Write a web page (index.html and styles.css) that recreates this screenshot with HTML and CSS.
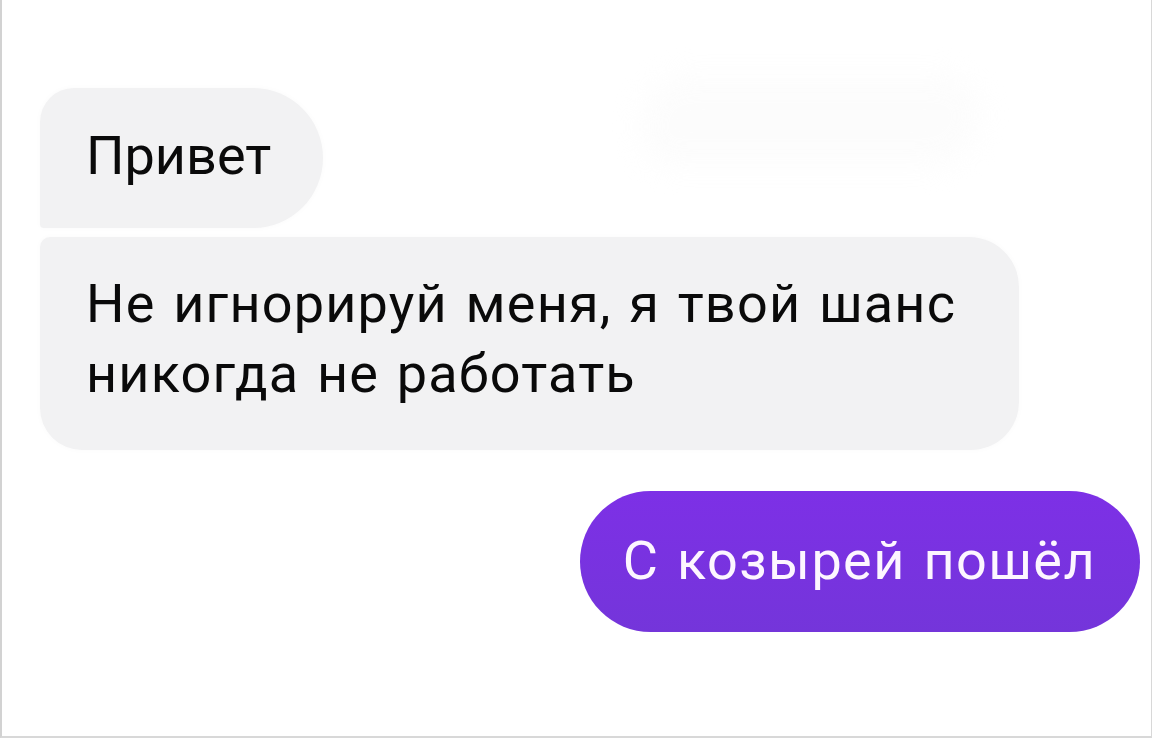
FILE: index.html
```html
<!DOCTYPE html>
<html lang="ru">
<head>
    <meta charset="UTF-8">
    <meta name="viewport" content="width=device-width, initial-scale=1.0">
    <title>Чат</title>
    <link rel="stylesheet" href="styles.css">
</head>
<body>
    <div class="screen">
        <div class="row">
            <div class="bubble in first">Привет</div>
            <div class="smudge"></div>
        </div>

        <div class="row">
            <div class="bubble in second">Не игнорируй меня, я твой шанс<br>никогда не работать</div>
        </div>

        <div class="row out-row">
            <div class="bubble out">С козырей пошёл</div>
        </div>
    </div>
</body>
</html>
```

FILE: styles.css
```css
html, body {
    margin: 0;
    padding: 0;
}

body {
    background-color: #ffffff;
    font-family: 'Roboto', 'Noto Sans', sans-serif;
    color: #0a0a0a;
}

.screen {
    box-sizing: border-box;
    width: 1152px;
    height: 738px;
    padding-top: 88px;
    border-left: 2px solid #d2d2d2;
    border-right: 1px solid #d8d8d8;
    border-bottom: 2px solid #d8d8d8;
    overflow: hidden;
}


.row {
    display: flex;
    align-items: flex-start;
    padding-left: 38px;
}

.bubble {
    font-size: 54px;
    line-height: 70px;
    white-space: nowrap;
}

.bubble.in {
    background-color: #f2f2f3;
    box-shadow: 0 0 6px rgba(0, 0, 0, 0.025);
}

.first {
    padding: 33px 52px 37px 46px;
    border-radius: 34px 70px 70px 4px;
}

.second {
    margin-top: 9px;
    padding: 32px 63px 41px 46px;
    border-radius: 10px 50px 48px 42px;
    letter-spacing: 1.2px;
    word-spacing: 3px;
}


/* washed-out leftover in the corner of the shot */
.smudge {
    width: 340px;
    height: 90px;
    margin-left: 318px;
    margin-top: -12px;
    background-color: #f9f9f9;
    border-radius: 60px 50px 70px 40px;
    filter: blur(14px);
    opacity: 0.45;
}


.out-row {
    justify-content: flex-end;
    padding-right: 11px;
    margin-top: 41px;
}

.bubble.out {
    padding: 35px 44px 36px 43px;
    border-radius: 72px;
    background: linear-gradient(#7d30e6, #7435da);
    color: #fdf6ff;
    letter-spacing: 1.4px;
    word-spacing: 3px;
}
```
